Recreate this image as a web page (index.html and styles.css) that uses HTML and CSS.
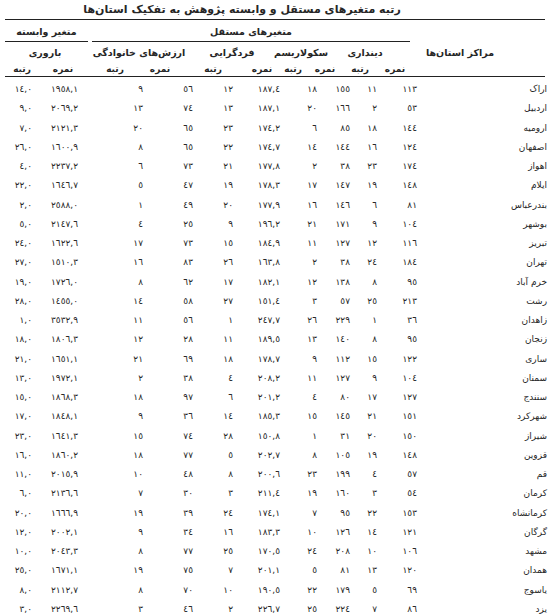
FILE: index.html
```html
<!DOCTYPE html>
<html lang="fa" dir="rtl">
<head>
<meta charset="utf-8">
<link rel="stylesheet" href="styles.css">
</head>
<body>
<div class="page">
  <div class="title">رتبه متغیرهای مستقل و وابسته پژوهش به تفکیک استان‌ها</div>
  <div class="head">
    <div class="h1">
      <div class="grp">متغیرهای مستقل</div>
      <div class="grp dep">متغیر وابسته</div>
    </div>
    <div class="h2">
      <div class="prov-h">مراکز استان‌ها</div>
      <div>دینداری</div>
      <div>سکولاریسم</div>
      <div>فردگرایی</div>
      <div>ارزش‌های خانوادگی</div>
      <div class="bar-h">باروری</div>
    </div>
    <div class="h3">
      <div>نمره</div><div>رتبه</div>
      <div>نمره</div><div>رتبه</div>
      <div>نمره</div><div>رتبه</div>
      <div>نمره</div><div>رتبه</div>
      <div>نمره</div><div>رتبه</div>
    </div>
  </div>
  <div class="rows">
    <div class="r"><span>اراک</span><span>١١٣</span><span>١١</span><span>١٥٥</span><span>١٨</span><span>١٨٧,٤</span><span>١٢</span><span>٥٦</span><span>٩</span><span>١٩٥٨,١</span><span>١٤,٠</span></div>
    <div class="r"><span>اردبیل</span><span>٥٣</span><span>٢</span><span>١٦٦</span><span>٢٠</span><span>١٨٧,١</span><span>١٣</span><span>٧٤</span><span>١٣</span><span>٢٠٦٩,٢</span><span>٩,٠</span></div>
    <div class="r"><span>ارومیه</span><span>١٤٤</span><span>١٨</span><span>٨٥</span><span>٦</span><span>١٧٤,٢</span><span>٢٣</span><span>٦٥</span><span>٢٠</span><span>٢١٢١,٣</span><span>٧,٠</span></div>
    <div class="r"><span>اصفهان</span><span>١٢٤</span><span>١٦</span><span>١٤٤</span><span>١٤</span><span>١٧٤,٧</span><span>٢٢</span><span>٦٥</span><span>٨</span><span>١٦٠٠,٩</span><span>٢٦,٠</span></div>
    <div class="r"><span>اهواز</span><span>١٧٤</span><span>٢٣</span><span>٣٨</span><span>٢</span><span>١٧٧,٨</span><span>٢١</span><span>٧٣</span><span>٦</span><span>٢٢٣٧,٢</span><span>٤,٠</span></div>
    <div class="r"><span>ایلام</span><span>١٤٨</span><span>١٩</span><span>١٤٧</span><span>١٧</span><span>١٧٨,٣</span><span>١٩</span><span>٤٧</span><span>٥</span><span>١٦٤٦,٧</span><span>٢٢,٠</span></div>
    <div class="r"><span>بندرعباس</span><span>٨١</span><span>٦</span><span>١٤٦</span><span>١٦</span><span>١٧٧,٩</span><span>٢٠</span><span>٤٩</span><span>١</span><span>٢٥٨٨,٠</span><span>٢,٠</span></div>
    <div class="r"><span>بوشهر</span><span>١٠٤</span><span>٩</span><span>١٧١</span><span>٢١</span><span>١٩٦,٢</span><span>٩</span><span>٢٥</span><span>٤</span><span>٢١٤٧,٦</span><span>٥,٠</span></div>
    <div class="r"><span>تبریز</span><span>١١٦</span><span>١٢</span><span>١٢٧</span><span>١١</span><span>١٨٤,٩</span><span>١٥</span><span>٧٣</span><span>١٧</span><span>١٦٢٢,٦</span><span>٢٤,٠</span></div>
    <div class="r"><span>تهران</span><span>١٨٤</span><span>٢٤</span><span>٣٨</span><span>٢</span><span>١٦٣,٨</span><span>٢٦</span><span>٨٣</span><span>١٦</span><span>١٥١٠,٣</span><span>٢٧,٠</span></div>
    <div class="r"><span>خرم آباد</span><span>٩٥</span><span>٨</span><span>١٣٨</span><span>١٢</span><span>١٨٢,١</span><span>١٧</span><span>٦٢</span><span>٨</span><span>١٧٢٦,٠</span><span>١٩,٠</span></div>
    <div class="r"><span>رشت</span><span>٢١٣</span><span>٢٥</span><span>٥٧</span><span>٣</span><span>١٥١,٤</span><span>٢٧</span><span>٥٨</span><span>١٤</span><span>١٤٥٥,٠</span><span>٢٨,٠</span></div>
    <div class="r"><span>زاهدان</span><span>٣٦</span><span>١</span><span>٢٢٩</span><span>٢٦</span><span>٢٤٧,٧</span><span>١</span><span>٥٦</span><span>١١</span><span>٣٥٣٢,٩</span><span>١,٠</span></div>
    <div class="r"><span>زنجان</span><span>٩٥</span><span>٨</span><span>١٤٠</span><span>١٣</span><span>١٨٩,٥</span><span>١١</span><span>٢٨</span><span>١٢</span><span>١٨٠٦,٣</span><span>١٨,٠</span></div>
    <div class="r"><span>ساری</span><span>١٢٢</span><span>١٥</span><span>١١٢</span><span>٩</span><span>١٧٨,٧</span><span>١٨</span><span>٦٩</span><span>٢١</span><span>١٦٥١,١</span><span>٢١,٠</span></div>
    <div class="r"><span>سمنان</span><span>١٠٤</span><span>٩</span><span>١٢٧</span><span>١١</span><span>٢٠٨,٢</span><span>٤</span><span>٣٨</span><span>٢</span><span>١٩٧٢,١</span><span>١٣,٠</span></div>
    <div class="r"><span>سنندج</span><span>١٢٧</span><span>١٧</span><span>٨٠</span><span>٤</span><span>٢٠١,٢</span><span>٦</span><span>٩٧</span><span>١٨</span><span>١٨٦٨,٣</span><span>١٥,٠</span></div>
    <div class="r"><span>شهرکرد</span><span>١٥١</span><span>٢١</span><span>١٤٥</span><span>١٥</span><span>١٨٥,٣</span><span>١٤</span><span>٣٦</span><span>٩</span><span>١٨٤٨,١</span><span>١٧,٠</span></div>
    <div class="r"><span>شیراز</span><span>١٥٠</span><span>٢٠</span><span>٣١</span><span>١</span><span>١٥٠,٨</span><span>٢٨</span><span>٧٤</span><span>١٥</span><span>١٦٤١,٣</span><span>٢٣,٠</span></div>
    <div class="r"><span>قزوین</span><span>١٤٨</span><span>١٩</span><span>١٠٥</span><span>٨</span><span>٢٠٢,٧</span><span>٥</span><span>٧٧</span><span>١٨</span><span>١٨٦٠,٢</span><span>١٦,٠</span></div>
    <div class="r"><span>قم</span><span>٥٧</span><span>٤</span><span>١٩٩</span><span>٢٣</span><span>٢٠٠,٦</span><span>٨</span><span>٤٨</span><span>١٠</span><span>٢٠١٥,٩</span><span>١١,٠</span></div>
    <div class="r"><span>کرمان</span><span>٥٤</span><span>٣</span><span>١٦٠</span><span>١٩</span><span>٢١١,٤</span><span>٣</span><span>٣٠</span><span>٧</span><span>٢١٣٦,٦</span><span>٦,٠</span></div>
    <div class="r"><span>کرمانشاه</span><span>١٥٣</span><span>٢٢</span><span>٩٥</span><span>٧</span><span>١٧٤,١</span><span>٢٤</span><span>٣٩</span><span>١٩</span><span>١٦٦٦,٩</span><span>٢٠,٠</span></div>
    <div class="r"><span>گرگان</span><span>١٢١</span><span>١٤</span><span>١٢٦</span><span>١٠</span><span>١٨٣,٣</span><span>١٦</span><span>٣٤</span><span>٩</span><span>٢٠٠٢,١</span><span>١٢,٠</span></div>
    <div class="r"><span>مشهد</span><span>١٠٦</span><span>١٠</span><span>٢٠٨</span><span>٢٤</span><span>١٧٠,٥</span><span>٢٥</span><span>٧٧</span><span>٨</span><span>٢٠٤٣,٣</span><span>١٠,٠</span></div>
    <div class="r"><span>همدان</span><span>١٢٠</span><span>١٣</span><span>٨١</span><span>٥</span><span>٢٠١,١</span><span>٧</span><span>٧٥</span><span>١٩</span><span>١٦٧١,١</span><span>٢٥,٠</span></div>
    <div class="r"><span>یاسوج</span><span>٦٩</span><span>٥</span><span>١٧٩</span><span>٢٢</span><span>١٩٠,٥</span><span>١٠</span><span>٧٠</span><span>٨</span><span>٢١١٢,٧</span><span>٨,٠</span></div>
    <div class="r"><span>یزد</span><span>٨٦</span><span>٧</span><span>٢٢٤</span><span>٢٥</span><span>٢٢٦,٧</span><span>٢</span><span>٤٦</span><span>٣</span><span>٢٢٦٩,٦</span><span>٣,٠</span></div>
  </div>
</div>
</body>
</html>
```
FILE: styles.css
```css
html, body {
  margin: 0;
  padding: 0;
  background: #ffffff;
}
body {
  color: #262626;
  font-family: "DejaVu Sans", sans-serif;
  direction: rtl;
}
.page {
  width: 550px;
}
.title {
  height: 19px;
  line-height: 19px;
  font-size: 11px;
  font-weight: bold;
  text-align: center;
  padding-right: 66px;
}
.head {
  margin: 0 5px;
  border-top: 1px solid #222222;
  border-bottom: 1px solid #222222;
  font-size: 9.5px;
  font-weight: bold;
}
.h1 {
  display: grid;
  grid-template-columns: 318px 87px;
  padding-right: 135px;
}
.grp {
  text-align: center;
  padding-top: 2px;
  height: 19px;
  line-height: 19px;
  border-bottom: 1px solid #222222;
}
.dep {
  margin-right: 4px;
}
.h2 {
  display: grid;
  grid-template-columns: 143px 74px 50px 92px 94px 87px;
  height: 21px;
  line-height: 21px;
  text-align: center;
  white-space: nowrap;
}
.prov-h {
  padding-right: 27px;
}
.bar-h {
  padding-right: 7px;
}
.h3 {
  display: grid;
  grid-template-columns: 28px 42px 28px 36px 26px 72px 34px 56px 48px 34px;
  padding-right: 136px;
  height: 13px;
  line-height: 13px;
  font-size: 9px;
  text-align: center;
  white-space: nowrap;
}
.h3 > div {
  justify-self: center;
}
.rows {
  padding-top: 3px;
}
.r {
  display: grid;
  grid-template-columns: 130px 40px 27px 33px 37px 47px 40px 50px 65px 46px 32px;
  padding-right: 3px;
  height: 19.25px;
  line-height: 19.25px;
  font-size: 9px;
  white-space: nowrap;
}
```
